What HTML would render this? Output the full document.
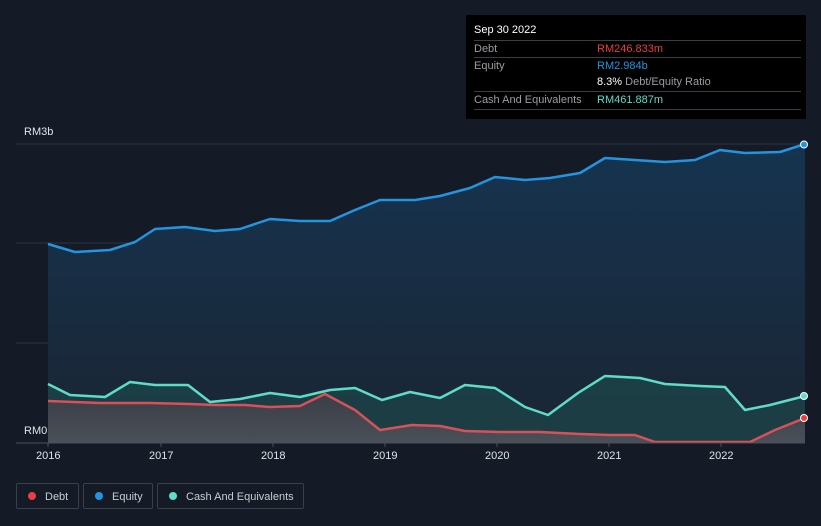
<!DOCTYPE html><html><head><style>
body{margin:0;width:821px;height:526px;background:#151b26;font-family:"Liberation Sans",sans-serif;overflow:hidden;position:relative}
.tt{position:absolute;left:466px;top:15px;width:340px;height:104px;background:#000;color:#fff;font-size:11px}
.tt .r{position:absolute;left:8px;width:327px;border-top:1px solid #3a3d42;height:17px;line-height:17px;color:#9a9da2}
.tt .v{position:absolute;left:123px}
.lg{position:absolute;top:483px;height:26px;border:1px solid #3a3f48;border-radius:2px;color:#c8ccd2;font-size:11px;line-height:26px;box-sizing:border-box}
.lg i{position:absolute;left:11px;top:8px;width:8px;height:8px;border-radius:50%}
.ax{position:absolute;top:450px;color:#e0e3e8;font-size:11px}
</style></head><body>
<svg width="821" height="526" style="position:absolute;left:0;top:0">
<defs><linearGradient id="g" x1="0" y1="0" x2="0" y2="1"><stop offset="0" stop-color="#163450"/><stop offset="1" stop-color="#1a2533"/></linearGradient>
<linearGradient id="gd" x1="0" y1="0" x2="0" y2="1"><stop offset="0" stop-color="#3a3e46"/><stop offset="1" stop-color="#4a5058"/></linearGradient></defs>
<g stroke="#2c3440" stroke-width="1"><line x1="16" y1="144" x2="805" y2="144"/><line x1="16" y1="243" x2="805" y2="243"/><line x1="16" y1="343" x2="805" y2="343"/></g>
<path fill="url(#g)" d="M48,244 L75,252 110,250 135,242 155,229 185,227 215,231 240,229 270,219 300,221 330,221 355,210 380,200 415,200 440,196 470,188 495,177 525,180 550,178 580,173 605,158 635,160 665,162 695,160 720,150 745,153 780,152 805,144 L805,443 L48,443Z"/>
<path fill="#1d4448" fill-opacity="0.8" d="M48,384 L70,395 105,397 130,382 155,385 188,385 210,402 240,399 270,393 300,397 330,390 355,388 382,400 410,392 440,398 465,385 495,388 525,407 548,415 578,393 605,376 640,378 665,384 700,386 725,387 745,410 770,405 805,396 L805,443 L48,443Z"/>
<path fill="url(#gd)" d="M48,401 L100,403 150,403 190,404 215,405 245,405 270,407 300,406 325,394 355,410 380,430 412,425 440,426 465,431 500,432 540,432 580,434 610,435 635,435 655,442 750,442 775,430 805,418 L805,443 L48,443Z"/>
<g fill="none" stroke-width="2.5" stroke-linejoin="round">
<path stroke="#2394df" d="M48,244 L75,252 110,250 135,242 155,229 185,227 215,231 240,229 270,219 300,221 330,221 355,210 380,200 415,200 440,196 470,188 495,177 525,180 550,178 580,173 605,158 635,160 665,162 695,160 720,150 745,153 780,152 805,144"/>
<path stroke="#5fdcc8" d="M48,384 L70,395 105,397 130,382 155,385 188,385 210,402 240,399 270,393 300,397 330,390 355,388 382,400 410,392 440,398 465,385 495,388 525,407 548,415 578,393 605,376 640,378 665,384 700,386 725,387 745,410 770,405 805,396"/>
<path stroke="#d85058" d="M48,401 L100,403 150,403 190,404 215,405 245,405 270,407 300,406 325,394 355,410 380,430 412,425 440,426 465,431 500,432 540,432 580,434 610,435 635,435 655,442 750,442 775,430 805,418"/>
</g>
<line x1="16" y1="443" x2="805" y2="443" stroke="#4a505a"/>
<g stroke="#4a505a"><line x1="48" y1="443" x2="48" y2="447"/><line x1="161" y1="443" x2="161" y2="447"/><line x1="273" y1="443" x2="273" y2="447"/><line x1="385" y1="443" x2="385" y2="447"/><line x1="497" y1="443" x2="497" y2="447"/><line x1="609" y1="443" x2="609" y2="447"/><line x1="721" y1="443" x2="721" y2="447"/></g>
<circle cx="804" cy="144.5" r="3.5" fill="#2394df" stroke="#fff"/>
<circle cx="804" cy="396" r="3.5" fill="#5fdcc8" stroke="#fff"/>
<circle cx="804" cy="418" r="3.5" fill="#e84040" stroke="#fff"/>
</svg>
<div style="position:absolute;left:24px;top:126px;color:#e0e3e8;font-size:11px">RM3b</div>
<div style="position:absolute;left:24px;top:425px;color:#e0e3e8;font-size:11px">RM0</div>
<div class="ax" style="left:36px">2016</div><div class="ax" style="left:149px">2017</div><div class="ax" style="left:261px">2018</div><div class="ax" style="left:373px">2019</div><div class="ax" style="left:485px">2020</div><div class="ax" style="left:597px">2021</div><div class="ax" style="left:709px">2022</div>
<div class="tt">
<div style="position:absolute;left:8px;top:9px;font-size:11px">Sep 30 2022</div>
<div class="r" style="top:25px">Debt<span class="v" style="color:#e83e3e">RM246.833m</span></div>
<div class="r" style="top:42px">Equity<span class="v" style="color:#2394df">RM2.984b</span></div>
<div class="r" style="top:59px;border:0"><span class="v"><b style="color:#fff;font-weight:normal">8.3%</b> Debt/Equity Ratio</span></div>
<div class="r" style="top:76px">Cash And Equivalents<span class="v" style="color:#5fdcc8">RM461.887m</span></div>
<div style="position:absolute;left:8px;top:94px;width:327px;border-top:1px solid #3a3d42"></div>
</div>
<div class="lg" style="left:16px;width:63px"><i style="background:#e84040"></i><span style="position:absolute;left:28px">Debt</span></div>
<div class="lg" style="left:83px;width:70px"><i style="background:#2394df"></i><span style="position:absolute;left:28px">Equity</span></div>
<div class="lg" style="left:157px;width:147px"><i style="background:#5fdcc8"></i><span style="position:absolute;left:28px">Cash And Equivalents</span></div>
</body></html>
